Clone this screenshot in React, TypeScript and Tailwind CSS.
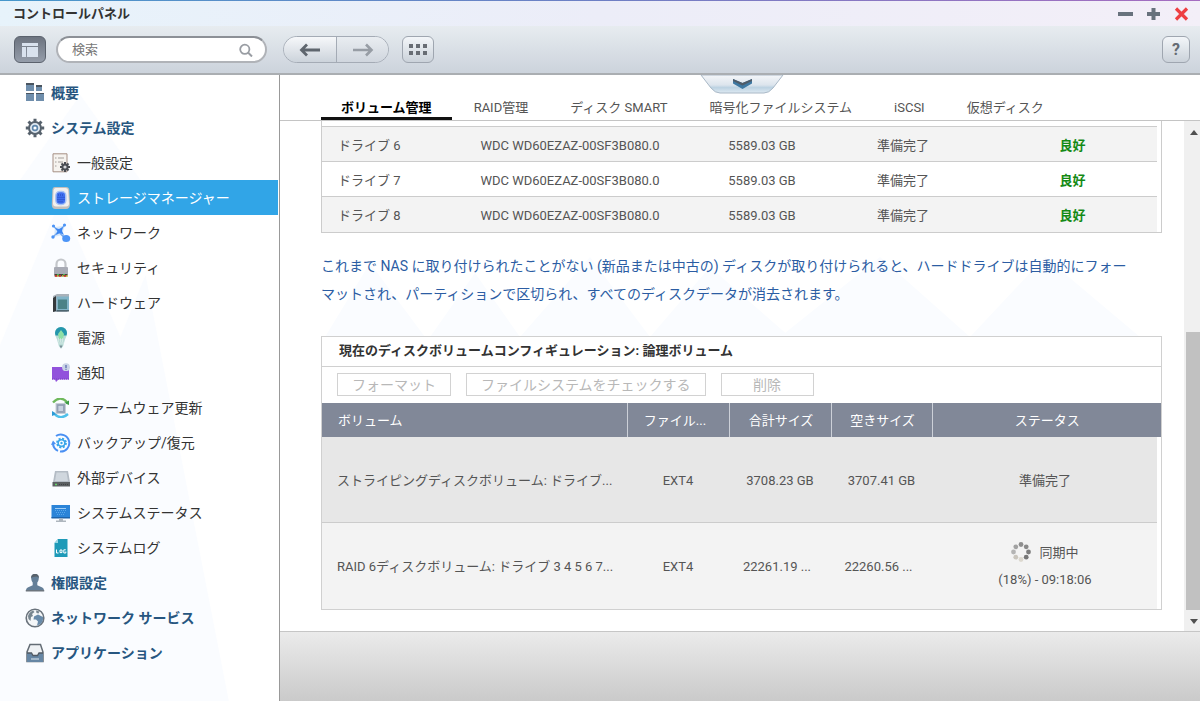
import type { ReactNode } from "react";

interface NavItem {
  label: string;
  icon: ReactNode;
  group?: boolean;
  active?: boolean;
}

interface Drive {
  name: string;
  model: string;
  capacity: string;
  status: string;
  smart: string;
}

const OverviewIcon = () => (
  <svg viewBox="0 0 20 20" className="h-5 w-5">
    <path d="M1 0h8v8H1zM11 2h6v6h-6zM1 10h8v8H1zM11 10h8v8h-8z" fill="#6f8eac" />
    <path d="M1 0h8v2H1zM11 2h6v2h-6zM1 10h8v1H1zM11 10h8v1h-8z" fill="#4a5560" />
  </svg>
);

const GearIcon = () => (
  <svg viewBox="0 0 20 20" className="h-5 w-5">
    <g stroke="#56616c" strokeWidth="3">
      <path d="M10 .8v3M10 16.2v3M.8 10h3M16.2 10h3M3.5 3.5l2.2 2.2M14.3 14.3l2.2 2.2M16.5 3.5l-2.2 2.2M5.7 14.3l-2.2 2.2" />
    </g>
    <circle cx="10" cy="10" r="6" fill="#dfe8f0" stroke="#56616c" strokeWidth="2" />
    <circle cx="10" cy="10" r="2.4" fill="#fff" stroke="#5f87ac" strokeWidth="1.6" />
  </svg>
);

const GeneralIcon = () => (
  <svg viewBox="0 0 20 20" className="h-5 w-5">
    <path d="M2 .8h14v18H2z" fill="#f6f3ef" stroke="#a58f84" />
    <path d="M4 5h1.5M7 5h6M4 9h1.5M7 9h5M4 13h1.5" stroke="#c0bcb8" strokeWidth="1.3" />
    <g stroke="#4c4f55" strokeWidth="2">
      <path d="M14 9v10M9 14h10M10.5 10.5l7 7M17.5 10.5l-7 7" />
    </g>
    <circle cx="14" cy="14" r="3.6" fill="#4c4f55" />
    <circle cx="14" cy="14" r="1.6" fill="#d8dade" />
  </svg>
);

const StorageIcon = () => (
  <svg viewBox="0 0 20 22" className="h-[22px] w-5">
    <path d="M4 0h11q3 0 3.3 3l.7 14q0 5-4 5H4.5Q.5 22 .8 17l.6-14Q1.6 0 4 0z" fill="#c4c0bd" />
    <path d="M4.5 1h10q2.500 0 2.700 2.400L18 16.500q0 3-3 3H5q-3 0-3-3l.5-13Q2.700 1 4.500 1z" fill="#f2f0ee" />
    <rect x="4.800" y="4.500" width="10" height="13" rx="4" fill="#3f6ff0" stroke="#a9c4f5" strokeWidth="1.500" />
    <path d="M7 8h6M6.500 10.300h7M6.500 12.600h7M7.500 14.800h4.500" stroke="#2246b8" strokeDasharray="1 1" />
  </svg>
);

const NetworkIcon = () => (
  <svg viewBox="0 0 20 20" className="h-5 w-5">
    <path d="M4 4L14 2.500 11 12 3 14z" fill="#d6e8fb" />
    <path d="M2 2.500l10 11M14 2L2 14" stroke="#76a9ee" strokeWidth="1.200" />
    <path d="M11 12l4 3" stroke="#76a9ee" strokeWidth="1.500" />
    <path d="M4 5l4 1 4-2-1 4 2 4-4-2-4 2 1.500-4z" fill="#3b86f2" />
    <circle cx="2.500" cy="3" r="1.600" fill="#4b94f7" />
    <circle cx="13.500" cy="2" r="1.600" fill="#4b94f7" />
    <circle cx="2" cy="14" r="1.700" fill="#4b94f7" />
    <ellipse cx="15.200" cy="15.500" rx="4" ry="3.500" fill="#4b94f7" />
  </svg>
);

const SecurityIcon = () => (
  <svg viewBox="0 0 20 20" className="h-5 w-5">
    <path d="M5.500 10V6a4.500 4.500 0 019 0v4" fill="none" stroke="#c3c6ca" strokeWidth="2.200" />
    <rect x="3" y="9" width="14" height="8" rx="1" fill="#a8abb5" />
    <path d="M3.500 16h13v2.500h-13z" fill="#49453a" />
    <path d="M4 18h2M8 18h2M13 18h2" stroke="#d8342c" strokeWidth="1.500" />
    <path d="M6 18h1.500M11 18h1.500M15.200 18h1.500" stroke="#d9c83a" strokeWidth="1.500" />
    <path d="M6 16.500h2M12 16.500h2" stroke="#45b05a" />
  </svg>
);

const HardwareIcon = () => (
  <svg viewBox="0 0 20 20" className="h-5 w-5">
    <path d="M2 3l4-2h12v16l-2 2H2z" fill="#a9b2ba" />
    <path d="M2 5l3-2v15l-3 1z" fill="#35393c" />
    <path d="M5.500 3.500H18V18H5.500z" fill="#81b4c8" />
    <path d="M7 6.500h9V16H7z" fill="#4a8287" />
    <path d="M5.500 17H18v1.500H5.500z" fill="#4d6570" />
  </svg>
);

const PowerIcon = () => (
  <svg viewBox="0 0 20 22" className="h-[22px] w-5">
    <path d="M10 0a6 6 0 016 6q0 3-2 6.500l-2 7-2 2-2-2-2-7Q4 9 4 6a6 6 0 016-6z" fill="#b9dcd7" />
    <path d="M10 0a6 6 0 016 6l-.5 2.500h-11L4 6a6 6 0 016-6z" fill="#2497ad" />
    <path d="M10 3l3 4-1 5H8L7 7z" fill="#8fe0a7" />
    <path d="M7 12h6M7 14h6M7.500 16h5" stroke="#e9f2ef" strokeDasharray="1 1" />
    <path d="M8.500 18.500h3L10 21.500z" fill="#788c94" />
  </svg>
);

const NotifyIcon = () => (
  <svg viewBox="0 0 20 20" className="h-5 w-5">
    <path d="M1 4h17v12.500H7.500l-2.500 2.500-1-2.500H1z" fill="#9152dc" />
    <path d="M1 16h17" stroke="#7740bd" strokeDasharray="1 1" />
    <circle cx="15" cy="4.200" r="3.900" fill="#c9d3e6" />
    <path d="M15 2v3M15 5.800v1" stroke="#5b6cb0" strokeWidth="1.300" />
  </svg>
);

const FirmwareIcon = () => (
  <svg viewBox="0 0 20 20" className="h-5 w-5">
    <path d="M2 4.500Q9-3 16 4" fill="none" stroke="#6fb95c" strokeWidth="2.400" />
    <path d="M18 2.500V7l-5-2z" fill="#3f9c46" />
    <path d="M17 16q-7 6-13 .5" fill="none" stroke="#4fc0ea" strokeWidth="2.400" />
    <path d="M1 18v-5l5 3z" fill="#2b9ad6" />
    <rect x="5" y="5.500" width="9.500" height="10" fill="#98a5b8" stroke="#c9cfd6" />
    <rect x="7" y="7.500" width="5.500" height="6" fill="#c7d1df" stroke="#8592a8" strokeWidth=".6" />
  </svg>
);

const BackupIcon = () => (
  <svg viewBox="0 0 20 20" className="h-5 w-5">
    <path d="M5 3A8.500 8.500 0 119 18.500" fill="none" stroke="#4a90f3" strokeWidth="2" />
    <path d="M2 10A8.500 8.500 0 007 17.800" fill="none" stroke="#4a90f3" strokeWidth="2" />
    <path d="M0 12l2-4.500 3 3.500z" fill="#4a90f3" />
    <circle cx="10.500" cy="10" r="4.400" fill="none" stroke="#3aa6ea" strokeWidth="2" strokeDasharray="2 1.450" />
    <circle cx="10.500" cy="10" r="3.300" fill="#fff" stroke="#3aa6ea" strokeWidth="1.600" />
    <circle cx="10.500" cy="10" r="1.200" fill="#3aa6ea" />
  </svg>
);

const ExternalIcon = () => (
  <svg viewBox="0 0 20 20" className="h-5 w-5">
    <path d="M4 3h13l2 11H2z" fill="#b4bcc5" />
    <path d="M5.500 4.500h10l1.500 8.500H4z" fill="#d0d7de" />
    <path d="M1.500 14H19v4.500H1.500z" fill="#5b5f62" />
    <path d="M4 16.500h2" stroke="#65d069" strokeWidth="1.500" />
    <path d="M8 16.500h9" stroke="#3f4244" strokeDasharray="1 1" />
  </svg>
);

const StatusIcon = () => (
  <svg viewBox="0 0 20 20" className="h-5 w-5">
    <path d="M.5 2H19v13H.5z" fill="#2b84d8" />
    <path d="M4 5.500h11" stroke="#9fcdf5" />
    <path d="M4 7.500h12M5 9.500h10M6 11.500h7" stroke="#5ba7ea" strokeDasharray="1 1" />
    <path d="M.5 14H19v1.500H.5z" fill="#1d63aa" />
    <path d="M8 15.500h4v2H8zM5 17.500h10V19H5z" fill="#aeb6be" />
  </svg>
);

const LogIcon = () => (
  <svg viewBox="0 0 20 20" className="h-5 w-5">
    <path d="M7 1h9.500v18h-13V5z" fill="#1e9ab8" />
    <path d="M7 1v4H3.500z" fill="#9ad7e3" />
    <path d="M5.500 11.500v3.500h2M9 12h2v2.600H9zM14.800 11.800h-2V15h2v-1.500" fill="none" stroke="#fff" />
  </svg>
);

const UserIcon = () => (
  <svg viewBox="0 0 20 20" className="h-5 w-5">
    <path d="M10 1c3 0 4 2 3.800 4.500-.2 2-.8 3-1.500 4v2.700l5 2.300q1.700.8 1.900 3.500H.8q.2-2.700 1.900-3.500l5-2.300V9.500c-.7-1-1.300-2-1.500-4C6 3 7 1 10 1z" fill="#647f98" />
    <path d="M10 1c3 0 4 2 3.800 4L12 3.500 8 4 6.200 5C6 3 7 1 10 1z" fill="#58616a" />
    <path d="M.8 17h18.400v1.500H.8z" fill="#6d757d" />
  </svg>
);

const GlobeIcon = () => (
  <svg viewBox="0 0 20 20" className="h-5 w-5">
    <circle cx="10" cy="10" r="8.800" fill="#f4f6f8" stroke="#6a737c" strokeWidth="1.600" />
    <path d="M3 8q1-4 5-5.500L9.500 4 7 6l1 2-2 1-.5 4L3.500 11z" fill="#77858f" />
    <path d="M9 8.500l4-2 5 2.500q.5 4-2.500 7L12 17.500l1-4-2-2H8.500z" fill="#688aa9" />
    <path d="M11 2.500l3.500 1-1 2-2-.5z" fill="#77858f" />
  </svg>
);

const AppsIcon = () => (
  <svg viewBox="0 0 20 20" className="h-5 w-5">
    <path d="M5 1.500h10.500L18 9v9.500H2V9z" fill="#eef1f4" stroke="#636c75" strokeWidth="1.500" />
    <path d="M2 10h4.500l1.500 2.500h4.500l1.500-2.500h4V19H2z" fill="#6686a4" />
    <path d="M2 10h4.500l1.500 2.500h4.500l1.500-2.500h4" fill="none" stroke="#505963" strokeWidth="1.300" />
    <path d="M6 16h8" stroke="#c3d2df" strokeWidth="1.300" />
  </svg>
);

const NAV: NavItem[] = [
  { label: "概要", icon: <OverviewIcon />, group: true },
  { label: "システム設定", icon: <GearIcon />, group: true },
  { label: "一般設定", icon: <GeneralIcon /> },
  { label: "ストレージマネージャー", icon: <StorageIcon />, active: true },
  { label: "ネットワーク", icon: <NetworkIcon /> },
  { label: "セキュリティ", icon: <SecurityIcon /> },
  { label: "ハードウェア", icon: <HardwareIcon /> },
  { label: "電源", icon: <PowerIcon /> },
  { label: "通知", icon: <NotifyIcon /> },
  { label: "ファームウェア更新", icon: <FirmwareIcon /> },
  { label: "バックアップ/復元", icon: <BackupIcon /> },
  { label: "外部デバイス", icon: <ExternalIcon /> },
  { label: "システムステータス", icon: <StatusIcon /> },
  { label: "システムログ", icon: <LogIcon /> },
  { label: "権限設定", icon: <UserIcon />, group: true },
  { label: "ネットワーク サービス", icon: <GlobeIcon />, group: true },
  { label: "アプリケーション", icon: <AppsIcon />, group: true },
];

const TABS = ["ボリューム管理", "RAID管理", "ディスク SMART", "暗号化ファイルシステム", "iSCSI", "仮想ディスク"];

const DRIVES: Drive[] = [6, 7, 8].map((n) => ({
  name: `ドライブ ${n}`,
  model: "WDC WD60EZAZ-00SF3B080.0",
  capacity: "5589.03 GB",
  status: "準備完了",
  smart: "良好",
}));

const SPINNER_DOTS = [
  { x: 10, y: 2.5, c: "#8f8f8f" },
  { x: 15.2, y: 4.8, c: "#8a8a8a" },
  { x: 17.5, y: 10, c: "#7d7d7d" },
  { x: 15.2, y: 15.2, c: "#777" },
  { x: 10, y: 17.5, c: "#dcd8cf" },
  { x: 4.8, y: 15.2, c: "#c9c5bd" },
  { x: 2.5, y: 10, c: "#b4b4b4" },
  { x: 4.8, y: 4.8, c: "#a2a2a2" },
];

function TitleBar() {
  return (
    <header className="shrink-0">
      <div className="h-px bg-linear-to-r from-[#4597cb] via-[#6d7fc4] to-[#a56cc0]" />
      <div className="flex h-[25px] items-center justify-between bg-linear-to-r from-[#e7f3fb] via-[#ecedf8] to-[#f3eff8] pr-[11px] pl-[13px]">
        <h1 className="text-[13px] font-bold text-[#333]">コントロールパネル</h1>
        <div className="flex items-center gap-[13px]">
          <button type="button" aria-label="最小化">
            <svg viewBox="0 0 15 15" className="h-[15px] w-[15px]">
              <path d="M0 8h15" stroke="#68727d" strokeWidth="4" />
            </svg>
          </button>
          <button type="button" aria-label="最大化">
            <svg viewBox="0 0 15 15" className="h-[15px] w-[15px]">
              <path d="M1 8h13M7.500 2v12" stroke="#68727d" strokeWidth="4" />
            </svg>
          </button>
          <button type="button" aria-label="閉じる">
            <svg viewBox="0 0 15 15" className="h-[15px] w-[15px]">
              <path d="M2 2.500l11 11M13 2.500l-11 11" stroke="#ee3f42" strokeWidth="3.200" />
            </svg>
          </button>
        </div>
      </div>
    </header>
  );
}

function Toolbar() {
  return (
    <div className="flex h-[49px] shrink-0 items-center border-b-2 border-[#aaaeb2] bg-linear-to-b from-[#e7ecf0] to-[#ccd3dc] pr-[10px] pl-[14px]">
      <button
        type="button"
        aria-label="サイドバー"
        className="flex h-[27px] w-8 items-center justify-center rounded-md border border-[#5b626d] bg-linear-to-b from-[#6d7480] to-[#959daa]"
      >
        <svg viewBox="0 0 16 16" className="h-4 w-4">
          <path d="M0 1h16v3H0zM0 5h4v10H0zM5 5h11v10H5z" fill="#d9e2ee" />
        </svg>
      </button>
      <div className="ml-[10px] flex h-[27px] w-[211px] items-center rounded-full border-2 border-[#b0b3b8] border-t-[#8c9096] bg-white pr-3 pl-[14px]">
        <input
          type="search"
          aria-label="検索"
          placeholder="検索"
          className="min-w-0 flex-1 bg-transparent text-[13px] text-[#333] outline-none placeholder:text-[#777]"
        />
        <svg viewBox="0 0 14 14" className="h-[14px] w-[14px]">
          <circle cx="5.800" cy="6.300" r="4.600" fill="none" stroke="#999da3" strokeWidth="1.800" />
          <path d="M9 9.500l4 4" stroke="#999da3" strokeWidth="2" />
        </svg>
      </div>
      <div className="ml-4 flex h-[27px] overflow-hidden rounded-full border border-[#a4abb5]">
        <button
          type="button"
          aria-label="戻る"
          className="flex w-[53px] items-center justify-center border-r border-[#a4abb5] bg-linear-to-b from-[#f6f8fa] to-[#ccd3db]"
        >
          <svg viewBox="0 0 22 14" className="h-[14px] w-[22px]">
            <path d="M21 7H3M8 1.500L2.500 7 8 12.500" fill="none" stroke="#5f666e" strokeWidth="2.800" />
          </svg>
        </button>
        <button
          type="button"
          aria-label="進む"
          className="flex w-[51px] items-center justify-center bg-linear-to-b from-[#e9edf1] to-[#d0d6de]"
        >
          <svg viewBox="0 0 22 14" className="h-[14px] w-[22px]">
            <path d="M1 7h18M14 1.500L19.500 7 14 12.500" fill="none" stroke="#979da5" strokeWidth="2.600" />
          </svg>
        </button>
      </div>
      <button
        type="button"
        aria-label="すべて表示"
        className="ml-[13px] flex h-[27px] w-8 items-center justify-center rounded-md border border-[#9fa6b0] bg-linear-to-b from-[#f3f6f9] to-[#cbd2da]"
      >
        <svg viewBox="0 0 18 11" className="h-[11px] w-[18px]">
          <path d="M0 0h4v4H0zM7 0h4v4H7zM14 0h4v4h-4zM0 7h4v4H0zM7 7h4v4H7zM14 7h4v4h-4z" fill="#686d74" />
        </svg>
      </button>
      <button
        type="button"
        className="ml-auto h-[27px] w-7 rounded-md border border-[#9fa6b0] bg-linear-to-b from-[#f3f6f9] to-[#cbd2da] text-base leading-none font-bold text-[#666c73]"
      >
        ?
      </button>
    </div>
  );
}

function Sidebar() {
  return (
    <nav className="relative w-[280px] shrink-0 border-r border-[#999] bg-white">
      <svg viewBox="0 0 278 626" className="absolute inset-0 h-full w-full" preserveAspectRatio="none" aria-hidden="true">
        <path d="M80 20L20 105h120zM60 125L0 270v356h228L145 200 120 262z" fill="#fafcff" />
      </svg>
      <ul className="relative">
        {NAV.map((item) => (
          <li key={item.label} className={item.active ? "mr-px bg-[#31a5e7]" : ""}>
            <a
              href="#"
              className={
                item.group
                  ? "flex h-[35px] items-center gap-[6px] pl-[25px] text-sm font-bold text-[#275680]"
                  : `flex h-[35px] items-center gap-[6px] pl-[51px] text-sm ${item.active ? "text-white" : "text-[#333]"}`
              }
            >
              {item.icon}
              <span>{item.label}</span>
            </a>
          </li>
        ))}
      </ul>
    </nav>
  );
}

function TabBar() {
  return (
    <div className="relative flex h-[46px] shrink-0 items-end gap-[2px] border-b border-[#c4c4c4] pl-[41px]" role="tablist">
      {TABS.map((tab, i) => (
        <button
          key={tab}
          type="button"
          role="tab"
          aria-selected={i === 0}
          className={
            i === 0
              ? "h-[26px] border-b-[3px] border-[#111] px-5 pt-1 text-[13px] font-bold whitespace-nowrap text-black"
              : "h-[26px] border-b-[3px] border-transparent px-5 pt-1 text-[13px] whitespace-nowrap text-[#555]"
          }
        >
          {tab}
        </button>
      ))}
      {/* Pull-down handle hanging from the toolbar */}
      <button type="button" aria-label="展開" className="absolute top-0 left-1/2 -ml-10">
        <svg viewBox="0 0 84 19" className="h-[19px] w-[84px]">
          <defs>
            <linearGradient id="handle" x1="0" y1="0" x2="0" y2="1">
              <stop offset="0" stopColor="#f4f6f9" />
              <stop offset=".55" stopColor="#dde5ed" />
              <stop offset=".7" stopColor="#bcd2e2" />
              <stop offset="1" stopColor="#dfeaf2" />
            </linearGradient>
          </defs>
          <path d="M1 0l10 13q4 5 9 5h44q5 0 9-5L83 0z" fill="url(#handle)" stroke="#a9b8c6" />
          <path d="M33 4l9.500 4L52 4v4.500L42.500 14 33 8.500z" fill="#3e78a2" />
          <path d="M33 4l9.500 4L52 4v2l-9.500 4.500L33 6z" fill="#4e5b68" />
        </svg>
      </button>
    </div>
  );
}

function DriveTable() {
  return (
    <div className="border-x border-b border-[#ccc] bg-white pt-[5px] pr-1">
      <table className="w-full table-fixed border-t border-[#ccc] text-[13px] text-[#555]">
        <colgroup>
          <col />
          <col className="w-[200px]" />
          <col className="w-[184px]" />
          <col className="w-[134px]" />
          <col className="w-[169px]" />
        </colgroup>
        <tbody>
          {DRIVES.map((d) => (
            <tr key={d.name} className="h-[35px] border-b border-[#ccc] odd:bg-[#f3f3f3] last:border-b-0">
              <td className="pt-[3px] pl-4">{d.name}</td>
              <td className="pt-[3px] text-center">{d.model}</td>
              <td className="pt-[3px] text-center">{d.capacity}</td>
              <td className="pt-[3px] pl-[23px]">{d.status}</td>
              <td className="pt-[3px] text-center font-bold text-[#148a14]">{d.smart}</td>
            </tr>
          ))}
        </tbody>
      </table>
    </div>
  );
}

function VolumePanel() {
  return (
    <section className="mt-7 border border-[#d0d0d0] bg-white">
      <h2 className="flex h-[30px] items-center border-b border-[#d0d0d0] pl-[17px] text-[13px] font-bold text-[#333]">
        現在のディスクボリュームコンフィギュレーション: 論理ボリューム
      </h2>
      <div className="flex h-9 items-center gap-[15px] pl-[15px]">
        {["フォーマット", "ファイルシステムをチェックする", "削除"].map((label) => (
          <button
            key={label}
            type="button"
            disabled
            className="h-[23px] min-w-[93px] border border-[#d2d2d2] bg-white px-[14px] text-sm leading-none whitespace-nowrap text-[#b8b8b8]"
          >
            {label}
          </button>
        ))}
      </div>
      <table className="w-full table-fixed text-[13px] text-[#555]">
        <colgroup>
          <col />
          <col className="w-[102px]" />
          <col className="w-[102px]" />
          <col className="w-[101px]" />
          <col className="w-[224px]" />
          <col className="w-1" />
        </colgroup>
        <thead>
          <tr className="h-[34px] bg-[#818898] text-white">
            <th className="border-r border-[#ccd0d8] pt-[2px] pl-4 text-left font-normal">ボリューム</th>
            <th className="border-r border-[#ccd0d8] pt-[2px] pr-2 font-normal">ファイル...</th>
            <th className="border-r border-[#ccd0d8] pt-[2px] font-normal">合計サイズ</th>
            <th className="border-r border-[#ccd0d8] pt-[2px] font-normal">空きサイズ</th>
            <th colSpan={2} className="pt-[2px] font-normal">
              ステータス
            </th>
          </tr>
        </thead>
        <tbody>
          <tr className="h-[86px] bg-[#e7e7e7] text-center">
            <td className="border-b border-[#ccc] pt-[2px] pl-[15px] text-left">ストライピングディスクボリューム: ドライブ...</td>
            <td className="border-b border-[#ccc] pt-[2px] pr-[2px]">EXT4</td>
            <td className="border-b border-[#ccc] pt-[2px] pr-[2px]">3708.23 GB</td>
            <td className="border-b border-[#ccc] pt-[2px] pr-[2px]">3707.41 GB</td>
            <td className="border-b border-[#ccc] pt-[2px]">準備完了</td>
            <td className="bg-white" />
          </tr>
          <tr className="h-[86px] bg-[#f3f3f3] text-center">
            <td className="pt-[2px] pl-[15px] text-left">RAID 6ディスクボリューム: ドライブ 3 4 5 6 7...</td>
            <td className="pt-[2px] pr-[2px]">EXT4</td>
            <td className="pt-[2px] pr-2">22261.19 ...</td>
            <td className="pt-[2px] pr-2">22260.56 ...</td>
            <td>
              <div className="flex h-[27px] items-center justify-center gap-2">
                <svg viewBox="0 0 20 20" className="h-5 w-5">
                  {SPINNER_DOTS.map((dot) => (
                    <circle key={`${dot.x}-${dot.y}`} cx={dot.x} cy={dot.y} r="2.400" fill={dot.c} />
                  ))}
                </svg>
                <span>同期中</span>
              </div>
              <div className="h-[27px] leading-[27px]">(18%) - 09:18:06</div>
            </td>
            <td className="bg-white" />
          </tr>
        </tbody>
      </table>
    </section>
  );
}

function ScrollTrack() {
  return (
    <div className="flex w-4 shrink-0 flex-col bg-[#f0f0f0]">
      <svg viewBox="0 0 16 21" className="h-[21px] w-4">
        <path d="M6 14h8l-4-5z" fill="#505050" />
      </svg>
      <div className="flex-[190]" />
      <div className="ml-[2px] flex-[278] bg-[#c1c1c1]" />
      <svg viewBox="0 0 16 21" className="h-[21px] w-4">
        <path d="M6 9h8l-4 5z" fill="#505050" />
      </svg>
    </div>
  );
}

export default function App() {
  return (
    <div className="flex h-screen min-w-[1000px] flex-col overflow-hidden bg-white font-['Roboto','Noto_Sans_CJK_JP',sans-serif]">
      <TitleBar />
      <Toolbar />
      <div className="flex min-h-0 flex-1">
        <Sidebar />
        <main className="flex min-w-0 flex-1 flex-col">
          <TabBar />
          <div className="flex min-h-0 flex-1">
            <div className="relative min-w-0 flex-1 overflow-hidden pr-[22px] pl-[41px]">
              <svg viewBox="0 0 904 220" className="absolute top-28 left-0 h-[220px] w-full" preserveAspectRatio="none" aria-hidden="true">
                <path
                  d="M45 104L90 30l55 74zM150 104l45-64 45 64zM240 104l70-80 60 80zM370 104l60-70 80 70zM500 104L600 24l90 80zM690 104l75-80 95 80z"
                  fill="#fafcff"
                />
              </svg>
              <div className="relative">
                <DriveTable />
                <p className="mt-[19px] pr-6 text-sm leading-7 text-[#2c5da3]">
                  これまで NAS に取り付けられたことがない (新品または中古の) ディスクが取り付けられると、ハードドライブは自動的にフォーマットされ、パーティションで区切られ、すべてのディスクデータが消去されます。
                </p>
                <VolumePanel />
              </div>
            </div>
            <ScrollTrack />
          </div>
          <footer className="h-[70px] shrink-0 border-t border-[#c6c6c6] bg-linear-to-b from-[#ebebeb] to-[#cacaca]" />
        </main>
      </div>
    </div>
  );
}
